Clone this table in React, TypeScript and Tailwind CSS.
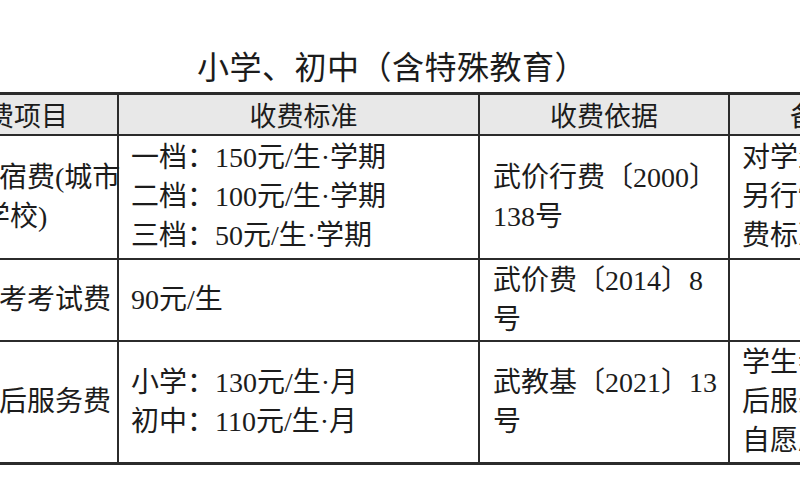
import React from "react";

const body = "font-['Liberation_Serif','Noto_Sans_CJK_SC',serif]";

const cell = "border-2 border-[#2b2b2b] align-middle text-left px-[12px] leading-[39px] whitespace-nowrap";
const headCell = "border-2 border-[#2b2b2b] bg-[#e8e8e8] align-middle text-center font-normal leading-none whitespace-nowrap font-['Noto_Sans_CJK_SC',sans-serif]";

export default function App() {
  return (
    <div className={`w-[800px] h-[500px] overflow-hidden bg-white text-[#1c1c1c] ${body}`}>
      <div className="h-[92px] pt-[38px] pr-[16px] flex items-center justify-center">
        <h1 className="text-[32px] leading-none font-normal font-['Noto_Sans_CJK_SC',serif] tracking-[0.5px]">
          小学、初中（含特殊教育）
        </h1>
      </div>

      <table className="ml-[-42px] border-collapse table-fixed w-[946px] text-[28px] border-t-[3px] border-b-[3px] border-[#2b2b2b]">
        <colgroup>
          <col className="w-[159px]" />
          <col className="w-[361px]" />
          <col className="w-[250px]" />
          <col className="w-[176px]" />
        </colgroup>
        <thead>
          <tr className="h-[41px]">
            <th className={`${headCell} text-right pr-[50px] text-[27px]`}>收费项目</th>
            <th className={`${headCell} pl-[10px] text-[27px]`}>收费标准</th>
            <th className={`${headCell} text-[27px]`}>收费依据</th>
            <th className={`${headCell} text-[27px]`}>备注</th>
          </tr>
        </thead>
        <tbody>
          <tr className="h-[124px]">
            <td className={`${cell} pl-[11px]`}>
              <div>住宿费(城市</div>
              <div className="pl-[11px]">学校)</div>
            </td>
            <td className={cell}>
              <div>一档：150元/生·学期</div>
              <div>二档：100元/生·学期</div>
              <div>三档：50元/生·学期</div>
            </td>
            <td className={`${cell} pl-[13px]`}>
              <div>武价行费〔2000〕</div>
              <div>138号</div>
            </td>
            <td className={cell}>
              <div>对学生住宿</div>
              <div>另行制定收</div>
              <div>费标准</div>
            </td>
          </tr>
          <tr className="h-[82px]">
            <td className={`${cell} pl-[11px]`}>
              <div>中考考试费</div>
            </td>
            <td className={cell}>
              <div>90元/生</div>
            </td>
            <td className={`${cell} pl-[13px]`}>
              <div>武价费〔2014〕8</div>
              <div>号</div>
            </td>
            <td className={cell}></td>
          </tr>
          <tr className="h-[123px]">
            <td className={`${cell} pl-[11px]`}>
              <div>课后服务费</div>
            </td>
            <td className={cell}>
              <div>小学：130元/生·月</div>
              <div>初中：110元/生·月</div>
            </td>
            <td className={`${cell} pl-[13px]`}>
              <div>武教基〔2021〕13</div>
              <div>号</div>
            </td>
            <td className={cell}>
              <div>学生参加课</div>
              <div>后服务遵循</div>
              <div>自愿原则</div>
            </td>
          </tr>
        </tbody>
      </table>
    </div>
  );
}
